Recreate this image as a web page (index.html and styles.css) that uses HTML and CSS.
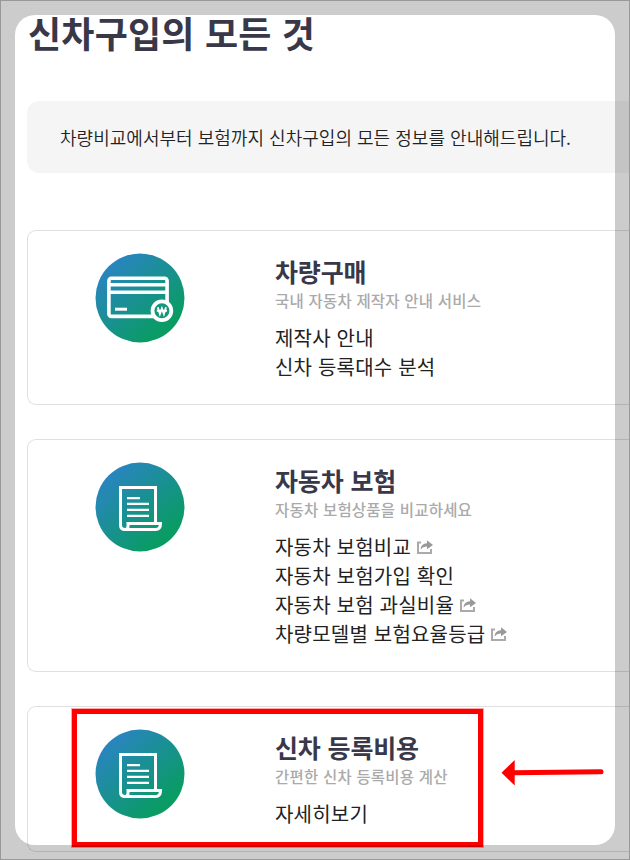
FILE: index.html
```html
<!DOCTYPE html>
<html lang="ko">
<head>
<meta charset="utf-8">
<title>신차구입의 모든 것</title>
<link rel="stylesheet" href="styles.css">
</head>
<body>
<svg class="defs" width="0" height="0" aria-hidden="true">
  <defs>
    <linearGradient id="disc" x1="0.1" y1="0.15" x2="0.8" y2="0.95">
      <stop offset="0" stop-color="#2a84c2"/>
      <stop offset="0.88" stop-color="#0a9b66"/>
      <stop offset="1" stop-color="#099c60"/>
    </linearGradient>
    <symbol id="receipt" viewBox="0 0 90 90">
      <circle cx="45" cy="45" r="44.5" fill="url(#disc)"/>
      <g fill="none" stroke="#fff" stroke-width="3">
        <path d="M60.500 60V25.500H25.500V63Q25.500 67.500 30 67.500H60.500Q65.500 67.500 65.500 61.500H33V64.500Q33 67.500 29.500 67.500" stroke-linejoin="miter"/>
        <path d="M32 36.200H45M32 41.900H54M32 47.900H54M32 53.900H54" stroke-width="2.200"/>
      </g>
    </symbol>
    <symbol id="share" viewBox="0 0 16 14">
      <path d="M4 2.500H1V13H14V9" fill="none" stroke="#aaa" stroke-width="2"/>
      <path d="M3.500 9.500Q4 3.500 10 3.300V.300L16 5L10 9.200V6.500Q6 6.200 3.500 9.500Z" fill="#999"/>
    </symbol>
  </defs>
</svg>
<main class="page">
  <h1 class="title">신차구입의 모든 것</h1>
  <p class="intro">차량비교에서부터 보험까지 신차구입의 모든 정보를 안내해드립니다.</p>
  <div class="cards">
    <section class="card">
      <svg class="icon" viewBox="0 0 90 90">
        <circle cx="45" cy="45" r="44.500" fill="url(#disc)"/>
        <g fill="none" stroke="#fff">
          <rect x="13.900" y="25.200" width="58.200" height="38.200" rx="2.500" stroke-width="3.600"/>
          <path d="M14 31.800H72M14 39.200H72" stroke-width="3.400"/>
          <path d="M20 56.200H32" stroke-width="3"/>
          <circle cx="66.900" cy="57.700" r="9.400" fill="#14967c" stroke-width="3.800"/>
          <path d="M62.800 54.300L64.900 61L66.900 55.500L68.900 61L71 54.300M61.800 57.700H72" stroke-width="1.900"/>
        </g>
      </svg>
      <div class="body">
        <h2>차량구매</h2>
        <p class="sub">국내 자동차 제작자 안내 서비스</p>
        <ul><li>제작사 안내</li><li>신차 등록대수 분석</li></ul>
      </div>
    </section>
    <section class="card">
      <svg class="icon"><use href="#receipt"/></svg>
      <div class="body">
        <h2>자동차 보험</h2>
        <p class="sub">자동차 보험상품을 비교하세요</p>
        <ul>
          <li>자동차 보험비교<svg class="share"><use href="#share"/></svg></li>
          <li>자동차 보험가입 확인</li>
          <li>자동차 보험 과실비율<svg class="share"><use href="#share"/></svg></li>
          <li>차량모델별 보험요율등급<svg class="share"><use href="#share"/></svg></li>
        </ul>
      </div>
    </section>
    <section class="card">
      <svg class="icon"><use href="#receipt"/></svg>
      <div class="body">
        <h2>신차 등록비용</h2>
        <p class="sub">간편한 신차 등록비용 계산</p>
        <ul><li>자세히보기</li></ul>
      </div>
    </section>
  </div>
</main>
<div class="highlight"></div>
<svg class="arrow" viewBox="0 0 104 28">
  <path d="M12 14.800L100 13.800" stroke="#f00" stroke-width="5" stroke-linecap="round"/>
  <path d="M.500 14.700L13.700 2V27.500Z" fill="#f00"/>
</svg>
<div class="frame"></div>
<div class="edge"></div>
</body>
</html>
```
FILE: styles.css
```css
* { box-sizing: border-box; }
html, body { height: 860px; overflow: hidden; }
body {
  position: relative;
  margin: 0;
  background: #fff;
  color: #222;
  font-family: "Noto Sans CJK KR", sans-serif;
}
h1, h2, p, ul { margin: 0; padding: 0; }
.defs { position: absolute; }
.page { padding: 6px 0 0 27px; }
.title {
  height: 52px;
  padding-left: 1px;
  line-height: 52px;
  font-size: 36px;
  font-weight: 700;
  letter-spacing: .2px;
  color: #393849;
  white-space: nowrap;
}
.intro {
  height: 72px;
  margin-top: 43px;
  padding-left: 33px;
  border-radius: 12px 0 0 12px;
  background: #f5f5f5;
  line-height: 72px;
  font-size: 18px;
  font-weight: 350;
  letter-spacing: .02px;
  white-space: nowrap;
}
.cards {
  display: flex;
  flex-direction: column;
  gap: 34px;
  margin-top: 57px;
}
.card {
  display: flex;
  gap: 90px;
  padding: 22px 0 22px 67px;
  border: 1px solid #dfe0e3;
  border-right: 0;
  border-radius: 9px 0 0 9px;
}
.icon { flex: none; width: 90px; height: 90px; }
.body { white-space: nowrap; }
h2 {
  height: 36px;
  line-height: 36px;
  font-size: 25px;
  font-weight: 700;
  letter-spacing: -.15px;
  color: #393849;
}
.sub {
  height: 24px;
  margin-bottom: 10px;
  line-height: 23px;
  font-size: 15.5px;
  font-weight: 500;
  letter-spacing: .2px;
  color: #aaa;
}
ul { padding-bottom: 1px; list-style: none; }
li {
  display: flex;
  align-items: center;
  height: 29px;
  font-size: 20px;
  line-height: 29px;
  letter-spacing: .2px;
}
.share { width: 16px; height: 14px; margin-left: 6px; }
.highlight {
  position: absolute;
  left: 72px;
  top: 709px;
  width: 411px;
  height: 138px;
  border: 5px solid #f00;
  box-shadow: 0 0 0 1px rgba(255, 0, 0, .35);
}
.arrow {
  position: absolute;
  left: 501px;
  top: 758px;
  width: 104px;
  height: 28px;
}
.frame {
  position: absolute;
  inset: 15px;
  border-radius: 20px;
  box-shadow: 0 0 0 50px rgba(0, 0, 0, .2);
}
.edge {
  position: absolute;
  inset: 0;
  border: 1px solid #999;
}
```
